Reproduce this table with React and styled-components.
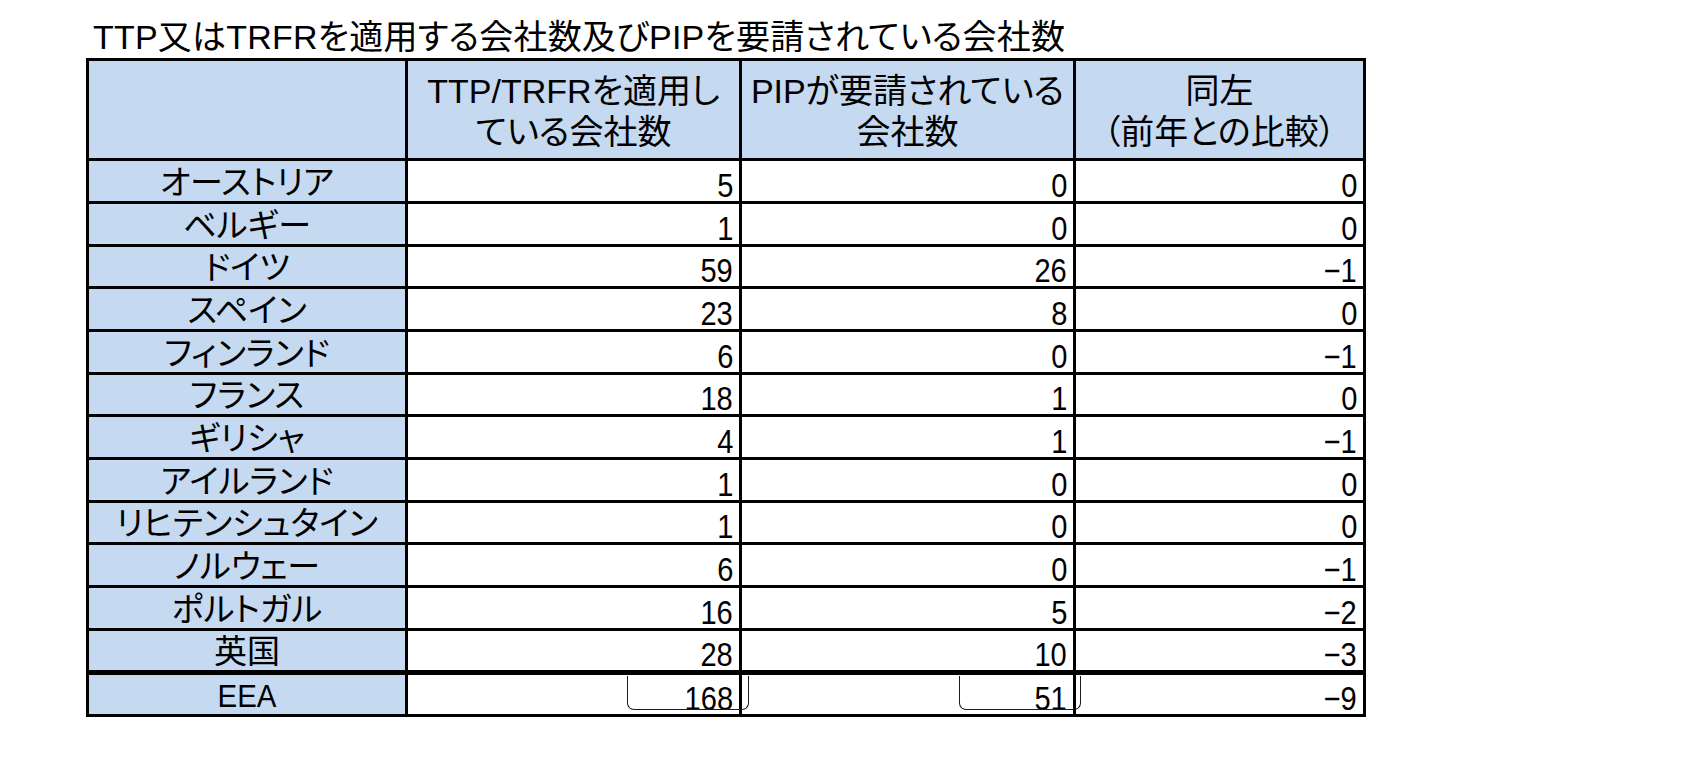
import React from "react";
import styled, { createGlobalStyle } from "styled-components";

const rows = [
  { name: "オーストリア", ttp: 5, pip: 0, diff: 0 },
  { name: "ベルギー", ttp: 1, pip: 0, diff: 0 },
  { name: "ドイツ", ttp: 59, pip: 26, diff: -1 },
  { name: "スペイン", ttp: 23, pip: 8, diff: 0 },
  { name: "フィンランド", ttp: 6, pip: 0, diff: -1 },
  { name: "フランス", ttp: 18, pip: 1, diff: 0 },
  { name: "ギリシャ", ttp: 4, pip: 1, diff: -1 },
  { name: "アイルランド", ttp: 1, pip: 0, diff: 0 },
  { name: "リヒテンシュタイン", ttp: 1, pip: 0, diff: 0 },
  { name: "ノルウェー", ttp: 6, pip: 0, diff: -1 },
  { name: "ポルトガル", ttp: 16, pip: 5, diff: -2 },
  { name: "英国", ttp: 28, pip: 10, diff: -3 },
];

const fmt = n => (n < 0 ? `\u2212${Math.abs(n)}` : `${n}`);

const GlobalStyle = createGlobalStyle`
  body {
    margin: 0;
    background: #fff;
    font-family: "Liberation Sans", "Noto Sans CJK JP", sans-serif;
    font-feature-settings: "palt";
    color: #000;
  }
`;

const Page = styled.div`
  padding: 17px 0 0 86px;
`;

const Title = styled.h1`
  margin: 0 0 0 7px;
  font-size: 34px;
  font-weight: 400;
  line-height: 41px;
  letter-spacing: 0.2px;
  white-space: nowrap;
`;

const Table = styled.table`
  border-collapse: collapse;
  border: 3px solid #000;
  table-layout: fixed;
  width: 1277px;
`;

const HeadRow = styled.tr`
  height: 100px;
`;

const BodyRow = styled.tr`
  height: ${p => p.$h}px;

  td {
    border-top-width: ${p => (p.$total ? "5px" : "3px")};
  }
`;

const HeadCell = styled.th`
  border: 3px solid #000;
  background: #c5d9f1;
  font-weight: 400;
  font-size: 34px;
  line-height: 41px;
  text-align: center;
  padding: 4px 0 0;
  white-space: nowrap;
`;

const NameCell = styled.td`
  border: 3px solid #000;
  background: #c5d9f1;
  font-size: 33px;
  line-height: 36px;
  text-align: center;
  padding: 3px 0 0;
  white-space: nowrap;
`;

const Latin = styled.span`
  display: inline-block;
  font-size: 32px;
  transform: scaleX(0.92);
`;

const NumCell = styled.td`
  position: relative;
  border: 3px solid #000;
  background: #fff;
  text-align: right;
  padding: 0 6px 0 0;
  vertical-align: bottom;
`;

const Num = styled.span`
  display: inline-block;
  font-family: "Liberation Sans", sans-serif;
  font-size: 33px;
  line-height: 30px;
  transform: scaleX(0.88);
  transform-origin: right bottom;
`;

const Bracket = styled.span`
  position: absolute;
  z-index: 1;
  top: 1px;
  bottom: 4px;
  left: ${p => p.$left}px;
  right: ${p => p.$right}px;
  border: 1.5px solid #1a1a1a;
  border-top: none;
  border-radius: 0 0 7px 7px;
  pointer-events: none;
`;

export default function App() {
  return (
    <>
      <GlobalStyle />
      <Page>
        <Title>TTP又はTRFRを適用する会社数及びPIPを要請されている会社数</Title>
        <Table>
          <colgroup>
            <col style={{ width: 319 }} />
            <col style={{ width: 334 }} />
            <col style={{ width: 334 }} />
            <col style={{ width: 290 }} />
          </colgroup>
          <thead>
            <HeadRow>
              <HeadCell />
              <HeadCell>
                TTP/TRFRを適用し
                <br />
                ている会社数
              </HeadCell>
              <HeadCell>
                PIPが要請されている
                <br />
                会社数
              </HeadCell>
              <HeadCell>
                同左
                <br />
                （前年との比較）
              </HeadCell>
            </HeadRow>
          </thead>
          <tbody>
            {rows.map((r, i) => (
              <BodyRow key={r.name} $h={i % 3 === 2 ? 42 : 43}>
                <NameCell>{r.name}</NameCell>
                <NumCell>
                  <Num>{fmt(r.ttp)}</Num>
                </NumCell>
                <NumCell>
                  <Num>{fmt(r.pip)}</Num>
                </NumCell>
                <NumCell>
                  <Num>{fmt(r.diff)}</Num>
                </NumCell>
              </BodyRow>
            ))}
            <BodyRow $total $h={43}>
              <NameCell>
                <Latin>EEA</Latin>
              </NameCell>
              <NumCell>
                <Bracket $left={219} $right={-10} />
                <Num>168</Num>
              </NumCell>
              <NumCell>
                <Bracket $left={217} $right={-8} />
                <Num>51</Num>
              </NumCell>
              <NumCell>
                <Num>{fmt(-9)}</Num>
              </NumCell>
            </BodyRow>
          </tbody>
        </Table>
      </Page>
    </>
  );
}
